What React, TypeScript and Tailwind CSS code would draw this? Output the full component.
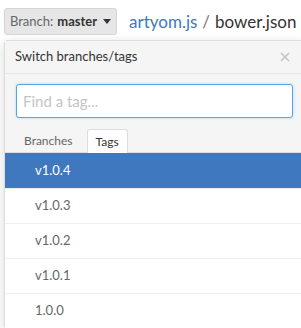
import { useState } from 'react';

const tags = ['v1.0.4', 'v1.0.3', 'v1.0.2', 'v1.0.1', '1.0.0'];

export default function App() {
  const [active] = useState('v1.0.4');

  return (
    <div className="h-[328px] w-[301px] overflow-hidden bg-white font-['Lato',sans-serif]">
      <div className="flex h-[35px] items-end gap-3 pl-1">
        <button className="flex h-[27px] w-[113px] shrink-0 items-center justify-center gap-1 rounded-[3px] border border-[#d5d5d5] bg-[#e6e6e6] text-[13px] text-[#666]">
          <span>Branch:</span>
          <span className="font-bold text-[#333]">master</span>
          <svg width="8" height="5" viewBox="0 0 8 5" className="ml-[2px]">
            <path d="M0 0h8L4 5z" fill="#333" />
          </svg>
        </button>
        <div className="mb-[5px] whitespace-nowrap text-[17px] leading-none text-[#333]">
          <span className="text-[#4078c0]">artyom.js</span>
          <span className="mx-[5px] text-[#777]">/</span>
          <span>bower.json</span>
        </div>
      </div>

      <div className="ml-1 mt-[5px] w-[300px] rounded-[3px] border border-[#ddd] shadow-[0_3px_12px_rgba(0,0,0,0.15)]">
        <div className="flex h-[33px] items-center justify-between border-b border-[#e5e5e5] bg-[#f5f5f5] pl-[10px] pr-[13px]">
          <span className="text-[13px] text-[#333]">Switch branches/tags</span>
          <svg width="10" height="10" viewBox="0 0 10 10">
            <path d="M1 1l8 8M9 1L1 9" stroke="#c4c4c4" strokeWidth="1.6" />
          </svg>
        </div>
        <div className="bg-[#f5f5f5] px-[11px] pt-[10px]">
          <input
            className="block h-[34px] w-[277px] rounded-[3px] border border-[#51a7e8] bg-white px-[6px] text-[15px] text-[#333] outline-none placeholder:text-[#c4c4c4] shadow-[0_0_3px_rgba(81,167,232,0.4)]"
            placeholder="Find a tag..."
          />
          <div className="mt-[11px] flex h-[23px] items-end text-[12px]">
            <span className="flex h-[23px] items-center px-[8px] text-[#666]">Branches</span>
            <span className="-mb-px ml-[6px] flex h-[24px] items-center rounded-t-[3px] border border-b-0 border-[#ddd] bg-white px-[8px] text-[#333]">
              Tags
            </span>
          </div>
        </div>
        <div className="border-t border-[#ddd] bg-white">
          {tags.map((t) => (
            <div
              key={t}
              className={
                t === active
                  ? 'flex h-[35px] items-center bg-[#4078c0] pl-[30px] text-[13px] text-white'
                  : 'flex h-[35px] items-center border-t border-[#eee] pl-[30px] text-[13px] text-[#666]'
              }
            >
              {t}
            </div>
          ))}
        </div>
      </div>
    </div>
  );
}
